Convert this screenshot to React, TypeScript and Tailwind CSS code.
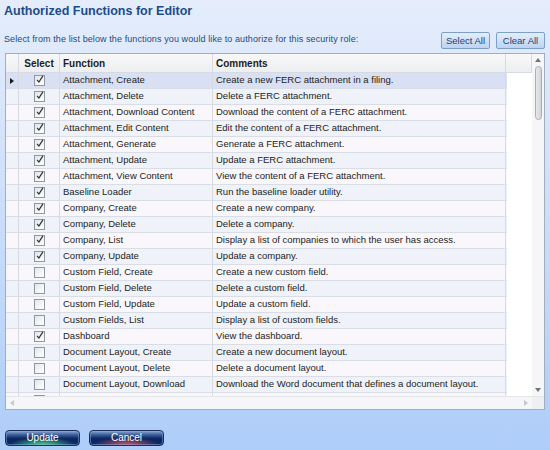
import { useState } from "react";

interface FunctionRow {
  name: string;
  comment: string;
  checked: boolean;
}

const rows: FunctionRow[] = [
  { name: "Attachment, Create", comment: "Create a new FERC attachment in a filing.", checked: true },
  { name: "Attachment, Delete", comment: "Delete a FERC attachment.", checked: true },
  { name: "Attachment, Download Content", comment: "Download the content of a FERC attachment.", checked: true },
  { name: "Attachment, Edit Content", comment: "Edit the content of a FERC attachment.", checked: true },
  { name: "Attachment, Generate", comment: "Generate a FERC attachment.", checked: true },
  { name: "Attachment, Update", comment: "Update a FERC attachment.", checked: true },
  { name: "Attachment, View Content", comment: "View the content of a FERC attachment.", checked: true },
  { name: "Baseline Loader", comment: "Run the baseline loader utility.", checked: true },
  { name: "Company, Create", comment: "Create a new company.", checked: true },
  { name: "Company, Delete", comment: "Delete a company.", checked: true },
  { name: "Company, List", comment: "Display a list of companies to which the user has access.", checked: true },
  { name: "Company, Update", comment: "Update a company.", checked: true },
  { name: "Custom Field, Create", comment: "Create a new custom field.", checked: false },
  { name: "Custom Field, Delete", comment: "Delete a custom field.", checked: false },
  { name: "Custom Field, Update", comment: "Update a custom field.", checked: false },
  { name: "Custom Fields, List", comment: "Display a list of custom fields.", checked: false },
  { name: "Dashboard", comment: "View the dashboard.", checked: true },
  { name: "Document Layout, Create", comment: "Create a new document layout.", checked: false },
  { name: "Document Layout, Delete", comment: "Delete a document layout.", checked: false },
  { name: "Document Layout, Download", comment: "Download the Word document that defines a document layout.", checked: false },
  // only the top of this row shows above the scroll bar
  { name: "", comment: "", checked: false },
];

function CheckBox({ checked }: { checked: boolean }) {
  return (
    <div className="w-[11px] h-[11px] border border-[#8e97a6] bg-gradient-to-br from-[#e4e6ea] to-[#ffffff] flex items-center justify-center">
      {checked && (
        <svg width="11" height="11" viewBox="0 0 11 11" className="-mt-[3px] ml-[1px]">
          <path d="M1.5 6 L4 9 L9.5 0.5" fill="none" stroke="#2b2b2b" strokeWidth="1.6" />
        </svg>
      )}
    </div>
  );
}

function NavyButton({ label, glow }: { label: string; glow: "green" | "red" }) {
  const glowClass =
    glow === "green"
      ? "bg-[radial-gradient(ellipse_45%_55%_at_50%_100%,#46d880_0%,rgba(70,216,128,0)_100%),linear-gradient(to_bottom,#8aa6d2_0%,#355794_30%,#0a2560_55%,#0a2c66_100%)]"
      : "bg-[radial-gradient(ellipse_45%_55%_at_50%_100%,#d8505e_0%,rgba(216,80,94,0)_100%),linear-gradient(to_bottom,#8aa6d2_0%,#355794_30%,#0a2560_55%,#0a2c66_100%)]";
  return (
    <button
      className={`w-[75px] h-[16px] rounded-[4px] border border-[#1b2f5c] text-white text-[10px] leading-none shadow-[inset_0_0_0_1px_rgba(140,170,220,0.5)] ${glowClass}`}
    >
      {label}
    </button>
  );
}

export default function App() {
  const [selected] = useState(0);

  return (
    <div className="w-[550px] h-[450px] overflow-hidden bg-gradient-to-b from-[#e5edfb] to-[#aecdf9] font-['Liberation_Sans',Tahoma,sans-serif]">
      <div className="pl-[4px] pt-[2px] text-[12.5px] font-bold text-[#1d4b8a] leading-[18px]">
        Authorized Functions for Editor
      </div>

      <div className="flex items-end justify-between pl-[4px] pr-[5px] mt-[12px]">
        <div className="text-[9px] text-[#1f4a82] pb-[3px] tracking-[0.1px]">
          Select from the list below the functions you would like to authorize for this security role:
        </div>
        <div className="flex gap-[6px]">
          <button className="w-[49px] h-[17px] rounded-[2px] border border-[#7f9fcb] bg-gradient-to-b from-[#e4eefc] to-[#bcd3f2] text-[9.5px] text-[#1e3f70] leading-none">
            Select All
          </button>
          <button className="w-[49px] h-[17px] rounded-[2px] border border-[#7f9fcb] bg-gradient-to-b from-[#e4eefc] to-[#bcd3f2] text-[9.5px] text-[#1e3f70] leading-none">
            Clear All
          </button>
        </div>
      </div>

      <div className="ml-[5px] mt-[4px] w-[540px] h-[357px] border border-[#a4adbb] bg-white flex flex-col">
        <div className="flex flex-1 min-h-0">
          <div className="w-[526px] flex flex-col">
            <div className="flex h-[19px] shrink-0 bg-gradient-to-b from-[#f8f8f8] to-[#eceef0] border-b border-[#d6dae2] text-[10px] font-bold text-[#1c1c1c]">
              <div className="w-[13px] border-r border-[#d6dae2]" />
              <div className="w-[41px] border-r border-[#d6dae2] flex items-center justify-center">Select</div>
              <div className="w-[153px] border-r border-[#d6dae2] flex items-center pl-[3px]">Function</div>
              <div className="w-[293px] border-r border-[#d6dae2] flex items-center pl-[3px]">Comments</div>
              <div className="flex-1 border-r border-[#d6dae2]" />
            </div>
            <div className="flex-1 overflow-hidden">
              {rows.map((row, i) => {
                const bg =
                  i === selected ? "bg-[#d9e0f4]" : i % 2 === 1 ? "bg-[#eff2f8]" : "bg-[#f9f7fc]";
                return (
                  <div
                    key={i}
                    className={`flex h-[16px] w-[501px] border-b border-[#d9dde6] text-[9.5px] text-[#232323] ${bg}`}
                  >
                    <div className="w-[13px] border-r border-[#d6dae2] flex items-center justify-center">
                      {i === selected && (
                        <svg width="4" height="6" viewBox="0 0 4 6">
                          <path d="M0 0 L4 3 L0 6 Z" fill="#1a1a1a" />
                        </svg>
                      )}
                    </div>
                    <div className="w-[41px] border-r border-[#d6dae2] flex items-center justify-center">
                      <CheckBox checked={row.checked} />
                    </div>
                    <div className="w-[153px] border-r border-[#d6dae2] flex items-center pl-[3px] whitespace-nowrap overflow-hidden">
                      {row.name}
                    </div>
                    <div className="w-[293px] border-r border-[#d6dae2] flex items-center pl-[3px] whitespace-nowrap overflow-hidden">
                      {row.comment}
                    </div>
                  </div>
                );
              })}
            </div>
          </div>
          <div className="flex-1 bg-[#f6f6f8] flex flex-col items-center pt-[4px] pb-[4px]">
            <svg width="6" height="4" viewBox="0 0 6 4">
              <path d="M0 4 L3 0 L6 4 Z" fill="#6f7580" />
            </svg>
            <div className="mt-[4px] w-[7px] h-[54px] rounded-full border border-[#a9aeb6] bg-gradient-to-r from-[#e8e9ec] to-[#d0d3d8]" />
            <div className="flex-1" />
            <svg width="6" height="4" viewBox="0 0 6 4">
              <path d="M0 0 L6 0 L3 4 Z" fill="#6f7580" />
            </svg>
          </div>
        </div>
        <div className="flex h-[13px] bg-[#f6f6f8] border-t border-[#e4e6ea]">
          <div className="w-[526px] flex items-center justify-between px-[4px]">
            <svg width="4" height="6" viewBox="0 0 4 6">
              <path d="M4 0 L0 3 L4 6 Z" fill="#c4c7cc" />
            </svg>
            <svg width="4" height="6" viewBox="0 0 4 6">
              <path d="M0 0 L4 3 L0 6 Z" fill="#c4c7cc" />
            </svg>
          </div>
          <div className="flex-1 bg-[#eeeff1]" />
        </div>
      </div>

      <div className="flex gap-[9px] ml-[5px] mt-[20px]">
        <NavyButton label="Update" glow="green" />
        <NavyButton label="Cancel" glow="red" />
      </div>
    </div>
  );
}
